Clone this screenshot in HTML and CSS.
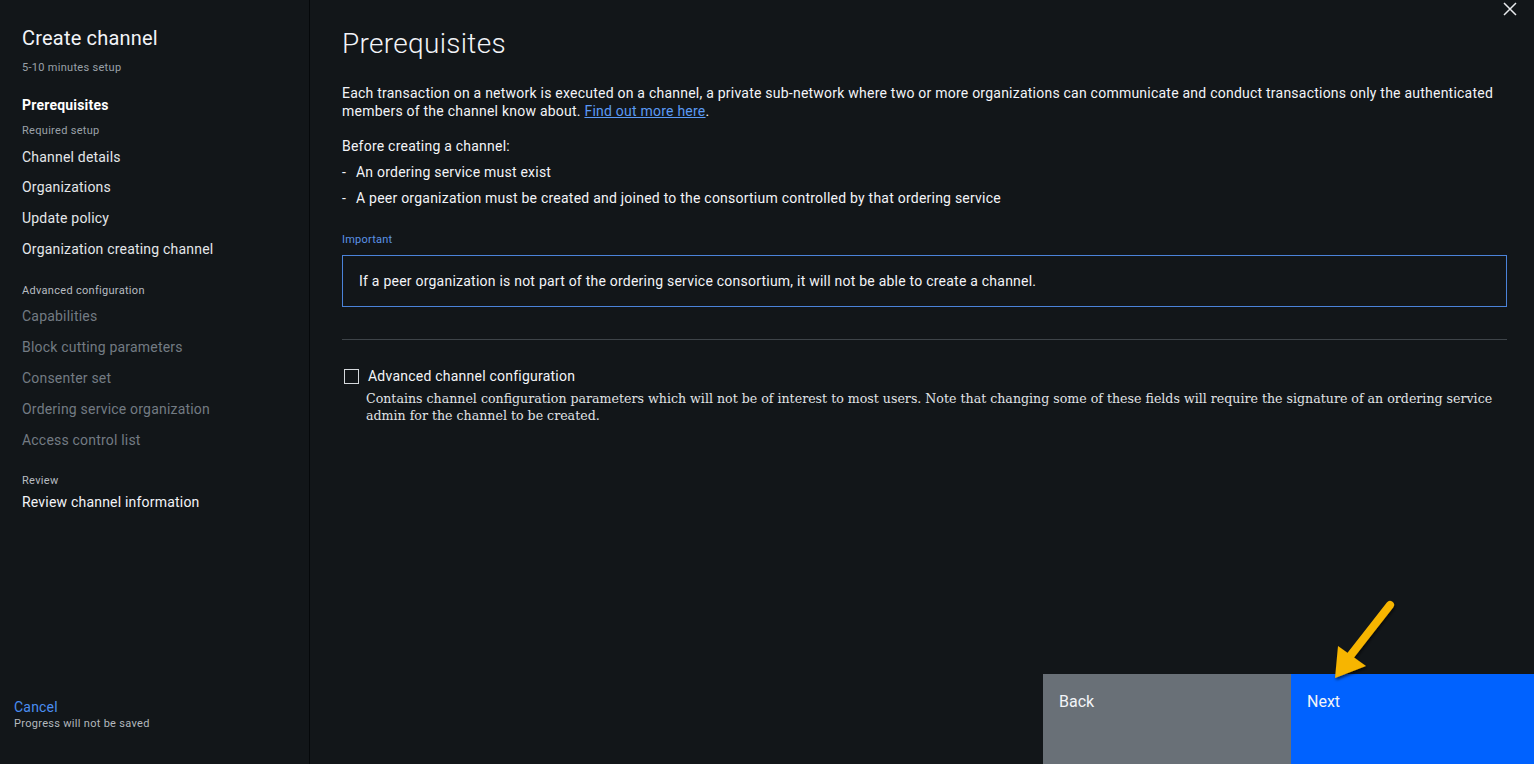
FILE: index.html
```html
<!DOCTYPE html>
<html lang="en">
<head>
<meta charset="utf-8">
<title>Create channel</title>
<link rel="stylesheet" href="styles.css">
</head>
<body>
<div class="app">
  <aside class="sidebar">
    <div class="side-top">
      <h1 class="side-title">Create channel</h1>
      <div class="side-sub">5-10 minutes setup</div>
      <nav class="steps">
        <div class="step step-active">Prerequisites</div>
        <div class="group-label">Required setup</div>
        <div class="step">Channel details</div>
        <div class="step">Organizations</div>
        <div class="step">Update policy</div>
        <div class="step">Organization creating channel</div>
        <div class="group-label group-adv">Advanced configuration</div>
        <div class="step step-disabled">Capabilities</div>
        <div class="step step-disabled">Block cutting parameters</div>
        <div class="step step-disabled">Consenter set</div>
        <div class="step step-disabled">Ordering service organization</div>
        <div class="step step-disabled">Access control list</div>
        <div class="group-label group-review">Review</div>
        <div class="step step-review">Review channel information</div>
      </nav>
    </div>
    <div class="side-bottom">
      <a class="cancel" href="#">Cancel</a>
      <div class="cancel-note">Progress will not be saved</div>
    </div>
  </aside>
  <main class="content">
    <button class="close" aria-label="Close">
      <svg width="16" height="16" viewBox="0 0 16 16"><path d="M2 2 L14 14 M14 2 L2 14" stroke="#e8eaed" stroke-width="1.5" fill="none"/></svg>
    </button>
    <h2 class="page-title">Prerequisites</h2>
    <p class="intro">Each transaction on a network is executed on a channel, a private sub-network where two or more organizations can communicate and conduct transactions only the authenticated members of the channel know about. <a class="link" href="#">Find out more here</a>.</p>
    <p class="before">Before creating a channel:</p>
    <ul class="reqs">
      <li><span class="dash">-</span>An ordering service must exist</li>
      <li><span class="dash">-</span>A peer organization must be created and joined to the consortium controlled by that ordering service</li>
    </ul>
    <div class="important-label">Important</div>
    <div class="important-box">If a peer organization is not part of the ordering service consortium, it will not be able to create a channel.</div>
    <hr class="divider">
    <div class="check-row">
      <span class="checkbox"></span>
      <span class="check-label">Advanced channel configuration</span>
    </div>
    <p class="check-desc">Contains channel configuration parameters which will not be of interest to most users. Note that changing some of these fields will require the signature of an ordering service admin for the channel to be created.</p>
    <div class="actions">
      <button class="btn btn-back">Back</button>
      <button class="btn btn-next">Next</button>
    </div>
    <svg class="arrow" width="90" height="100" viewBox="0 0 90 100">
      <defs>
        <filter id="sh" x="-20%" y="-20%" width="140%" height="140%">
          <feDropShadow dx="1" dy="2" stdDeviation="1.5" flood-color="#000" flood-opacity="0.6"/>
        </filter>
      </defs>
      <g filter="url(#sh)">
        <path d="M73 9 L30 64" stroke="#f7b500" stroke-width="8" stroke-linecap="round" fill="none"/>
        <path d="M18 82 L21 50 L49 70 Z" fill="#f7b500"/>
      </g>
    </svg>
  </main>
</div>
</body>
</html>
```
FILE: styles.css
```css
* { box-sizing: border-box; }
html, body { margin: 0; padding: 0; }
body {
  background: #121619;
  color: #f2f4f8;
  font-family: Roboto, "Noto Sans", sans-serif;
  width: 1534px;
  height: 764px;
  overflow: hidden;
}
.app {
  display: flex;
  height: 764px;
}
.sidebar {
  width: 310px;
  flex: none;
  border-right: 1px solid #05080a;
  display: flex;
  flex-direction: column;
  justify-content: space-between;
}
.side-top { padding: 26px 0 0 22px; }
.side-title {
  margin: 0;
  font-size: 20px;
  font-weight: 400;
  line-height: 24px;
  color: #f2f4f8;
  letter-spacing: 0.2px;
}
.side-sub {
  margin-top: 11px;
  font-size: 11px;
  line-height: 14px;
  color: #9aa1a8;
  letter-spacing: 0.3px;
}
.steps { margin-top: 19px; display: flex; flex-direction: column; }
.step {
  font-size: 14px;
  line-height: 18px;
  height: 31px;
  padding-top: 2px;
  color: #e4e7ea;
  letter-spacing: 0.2px;
}
.step-active { font-weight: 700; color: #ffffff; height: 30px; }
.step:nth-child(3) { padding-top: 3px; }
.step-disabled { color: #737b83; }
.group-label {
  font-size: 11px;
  line-height: 14px;
  height: 21px;
  color: #9aa1a8;
  letter-spacing: 0.3px;
}
.group-adv { margin-top: 15px; color: #b7bcc1; }
.group-review { margin-top: 14px; height: 17px; color: #b7bcc1; }
.step-review { color: #f2f4f8; }
.side-bottom { padding: 0 0 33px 14px; }
.cancel {
  display: block;
  font-size: 14px;
  line-height: 18px;
  color: #4a8df0;
  text-decoration: none;
  letter-spacing: 0.2px;
}
.cancel-note {
  margin-top: 1px;
  font-size: 11px;
  line-height: 14px;
  color: #b3b8bd;
  letter-spacing: 0.3px;
}
.content {
  flex: 1;
  position: relative;
  padding: 27px 27px 0 32px;
  letter-spacing: 0.23px;
}
.close {
  position: absolute;
  top: 0;
  right: 14px;
  width: 20px;
  height: 18px;
  padding: 0;
  border: 0;
  background: transparent;
  display: flex;
  align-items: center;
  justify-content: center;
}
.page-title {
  margin: 0;
  font-size: 28px;
  font-weight: 300;
  line-height: 34px;
  color: #f2f4f8;
  letter-spacing: 0.3px;
}
.intro {
  margin: 23px 0 0 0;
  font-size: 14px;
  line-height: 18px;
  color: #f2f4f8;
}
.link { color: #5b9af5; text-decoration: underline; }
.before {
  margin: 17px 0 0 0;
  font-size: 14px;
  line-height: 18px;
}
.reqs {
  list-style: none;
  margin: 8px 0 0 0;
  padding: 0;
  display: flex;
  flex-direction: column;
  gap: 8px;
}
.reqs li {
  font-size: 14px;
  line-height: 18px;
  display: flex;
}
.dash { width: 14px; flex: none; }
.important-label {
  margin-top: 26px;
  font-size: 11px;
  line-height: 14px;
  color: #5b93e6;
}
.important-box {
  margin-top: 8px;
  border: 1px solid #4b83d9;
  height: 52px;
  padding: 16px 16px 0 16px;
  font-size: 14px;
  line-height: 18px;
  color: #f2f4f8;
}
.divider {
  margin: 32px 0 0 0;
  border: 0;
  border-top: 1px solid #3e4449;
}
.check-row {
  margin-top: 27px;
  display: flex;
  align-items: center;
  gap: 9px;
  padding-left: 2px;
}
.checkbox {
  width: 15px;
  height: 15px;
  border: 1px solid #d5d9dd;
  flex: none;
}
.check-label { font-size: 14px; line-height: 18px; }
.check-desc {
  margin: 5px 0 0 24px;
  font-family: "DejaVu Serif", serif;
  font-size: 12.6px;
  line-height: 17px;
  color: #e0e3e6;
  letter-spacing: 0;
}
.actions {
  position: absolute;
  right: 0;
  bottom: 0;
  display: flex;
}
.btn {
  border: 0;
  height: 90px;
  padding: 18px 16px 0 16px;
  text-align: left;
  display: flex;
  align-items: flex-start;
  font-family: Roboto, "Noto Sans", sans-serif;
  font-size: 16px;
  color: #f2f4f8;
}
.btn-back { width: 248px; background: #697077; }
.btn-next { width: 243px; background: #0062ff; }
.arrow {
  position: absolute;
  left: 1007px;
  top: 596px;
  pointer-events: none;
}
```
